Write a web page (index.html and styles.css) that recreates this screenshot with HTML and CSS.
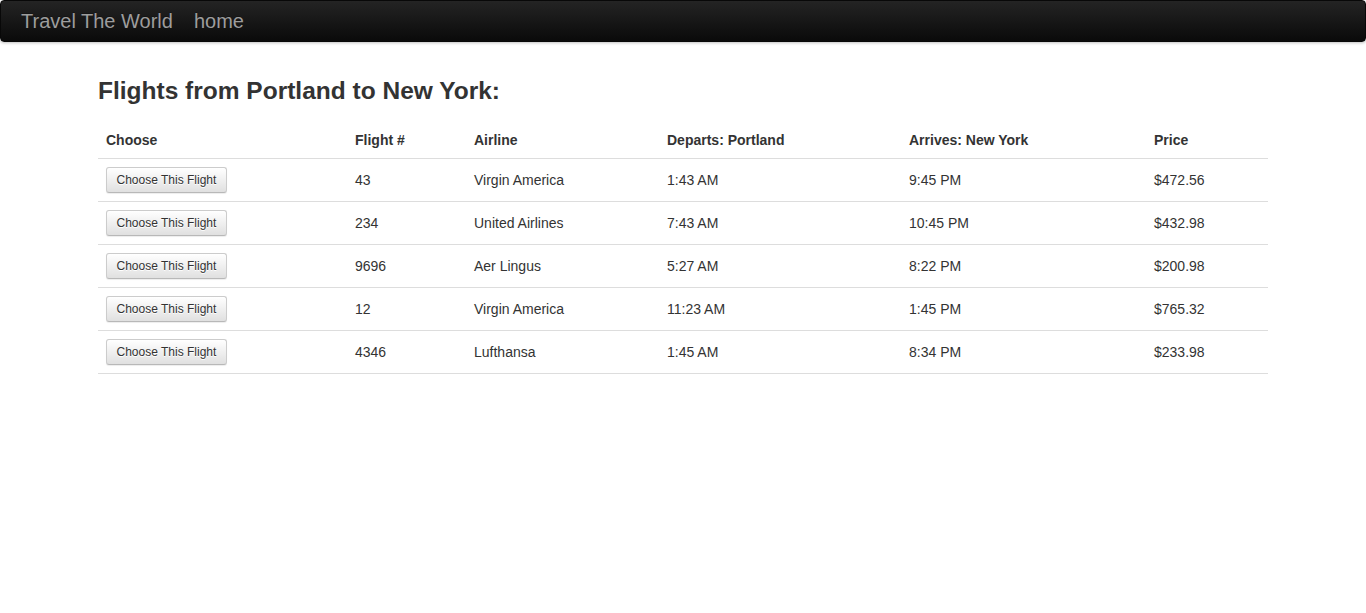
FILE: index.html
```html
<!DOCTYPE html>
<html>
<head>
<meta charset="utf-8">
<title>Travel The World</title>
<link rel="stylesheet" href="styles.css">
</head>
<body>
<nav class="navbar">
  <a class="brand" href="#">Travel The World</a>
  <a class="nav-link" href="#">home</a>
</nav>
<main class="container">
  <h3 class="title">Flights from Portland to New York:</h3>
  <table class="flights">
    <colgroup>
      <col class="c1"><col class="c2"><col class="c3"><col class="c4"><col class="c5"><col class="c6">
    </colgroup>
    <thead>
      <tr><th>Choose</th><th>Flight #</th><th>Airline</th><th>Departs: Portland</th><th>Arrives: New York</th><th>Price</th></tr>
    </thead>
    <tbody>
      <tr><td><button class="btn">Choose This Flight</button></td><td>43</td><td>Virgin America</td><td>1:43 AM</td><td>9:45 PM</td><td>$472.56</td></tr>
      <tr><td><button class="btn">Choose This Flight</button></td><td>234</td><td>United Airlines</td><td>7:43 AM</td><td>10:45 PM</td><td>$432.98</td></tr>
      <tr><td><button class="btn">Choose This Flight</button></td><td>9696</td><td>Aer Lingus</td><td>5:27 AM</td><td>8:22 PM</td><td>$200.98</td></tr>
      <tr><td><button class="btn">Choose This Flight</button></td><td>12</td><td>Virgin America</td><td>11:23 AM</td><td>1:45 PM</td><td>$765.32</td></tr>
      <tr><td><button class="btn">Choose This Flight</button></td><td>4346</td><td>Lufthansa</td><td>1:45 AM</td><td>8:34 PM</td><td>$233.98</td></tr>
    </tbody>
  </table>
</main>
</body>
</html>
```
FILE: styles.css
```css
* { box-sizing: border-box; }
html, body { margin: 0; padding: 0; background: #fff; }
body {
  font-family: "Liberation Sans", Arial, Helvetica, sans-serif;
  font-size: 14px;
  line-height: 20px;
  color: #333;
}
.navbar {
  display: flex;
  align-items: center;
  height: 42px;
  padding-left: 20px;
  gap: 21px;
  background: linear-gradient(to bottom, #242424 0%, #0a0a0a 100%);
  border: 1px solid #080808;
  border-radius: 4px;
  box-shadow: 0 1px 3px rgba(0,0,0,0.25);
}
.navbar a {
  color: #9d9d9d;
  text-decoration: none;
  font-size: 20px;
  line-height: 20px;
  text-shadow: 0 -1px 0 rgba(0,0,0,0.25);
}
.container {
  width: 1170px;
  margin: 0 auto;
  padding-top: 36px;
}
.title {
  margin: 0 0 18px;
  font-size: 24.5px;
  line-height: 26.4px;
  font-weight: bold;
  color: #333;
}
.flights {
  width: 100%;
  border-collapse: collapse;
  table-layout: fixed;
}
.c1 { width: 249px; }
.c2 { width: 119px; }
.c3 { width: 193px; }
.c4 { width: 242px; }
.c5 { width: 245px; }
.c6 { width: 122px; }
.flights th {
  text-align: left;
  font-weight: bold;
  padding: 8px;
  line-height: 20px;
  border-bottom: 1px solid #ddd;
}
.flights td {
  padding: 8px;
  line-height: 20px;
  vertical-align: middle;
  border-bottom: 1px solid #ddd;
}
.btn {
  display: inline-block;
  font-family: "Liberation Sans", Arial, Helvetica, sans-serif;
  font-size: 12px;
  line-height: 16px;
  padding: 4px 9.5px;
  height: 26px;
  white-space: nowrap;
  vertical-align: middle;
  color: #333;
  background: linear-gradient(to bottom, #fff 0%, #e0e0e0 100%);
  border: 1px solid #ccc;
  border-bottom-color: #b8b8b8;
  border-radius: 3px;
  box-shadow: inset 0 1px 0 rgba(255,255,255,0.15), 0 1px 1px rgba(0,0,0,0.075);
  text-shadow: 0 1px 0 #fff;
  cursor: pointer;
}
```
